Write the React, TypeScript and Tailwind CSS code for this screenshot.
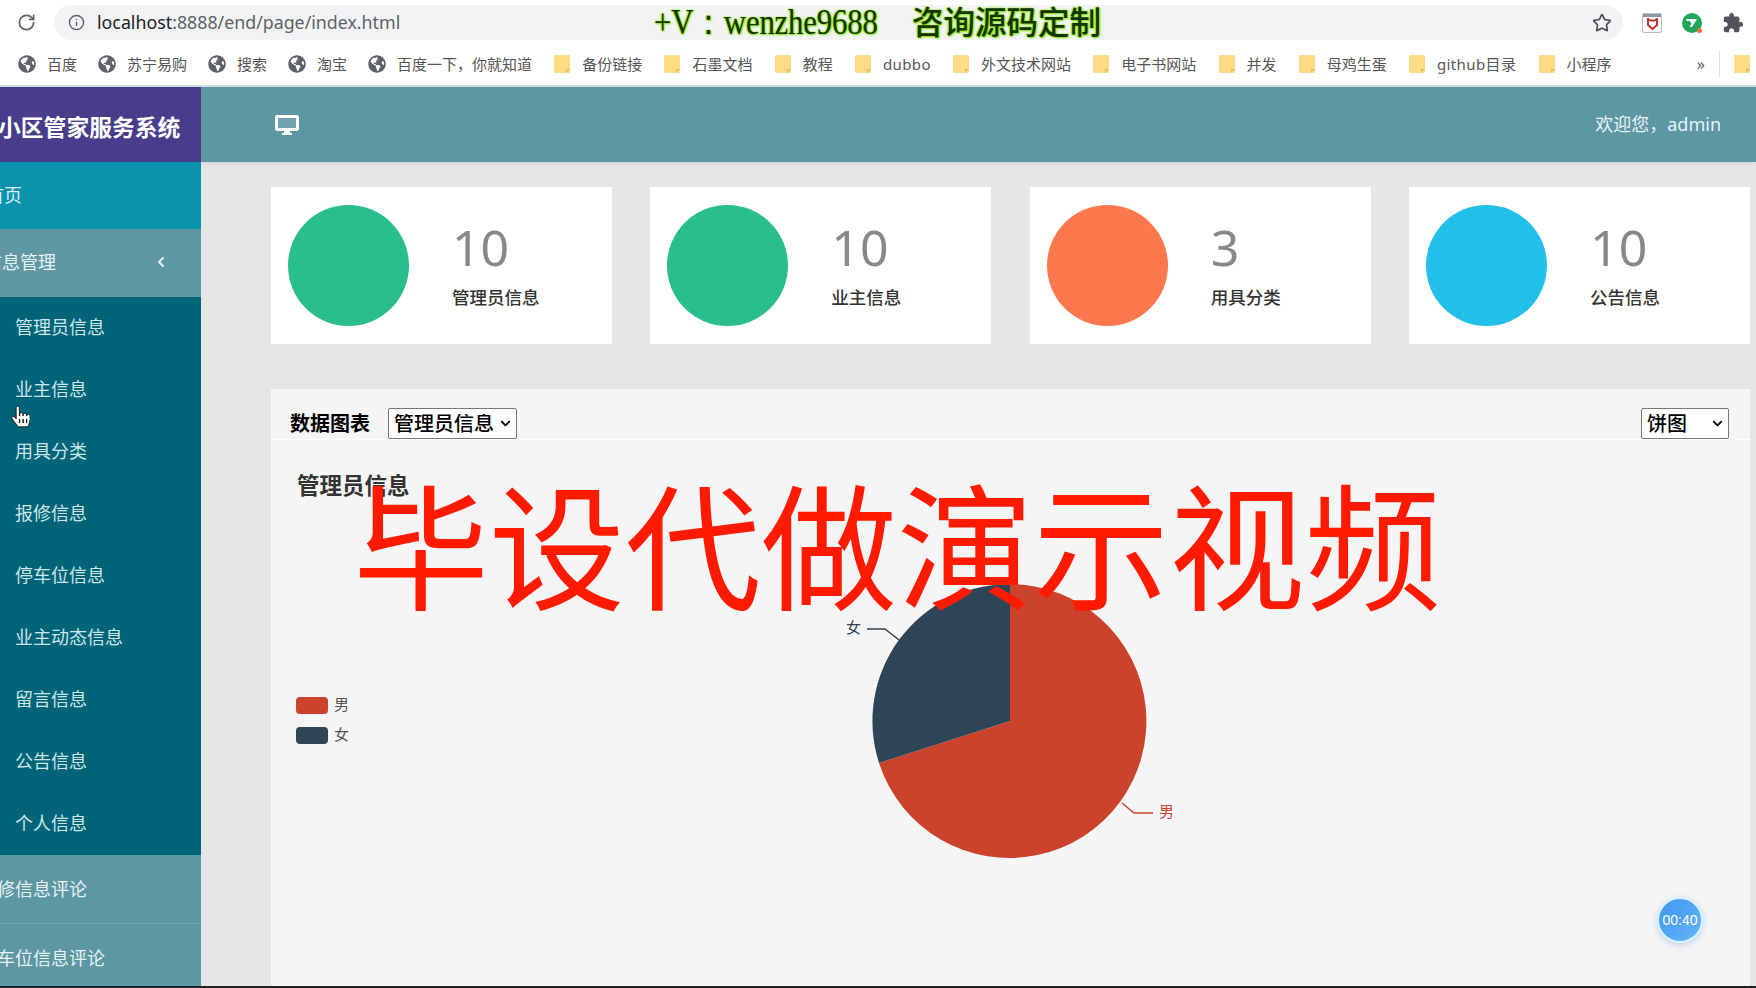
import React from 'react';
import { ChevronDown, ChevronLeft, RotateCw, Info, Star } from 'lucide-react';
import { FaGlobeAmericas, FaHandPointer } from 'react-icons/fa';
import { MdExtension } from 'react-icons/md';

const cjk = "font-['Noto_Sans','Noto_Sans_CJK_SC',sans-serif]";

type Bookmark = { label: string; folder?: boolean; latin?: boolean };

const bookmarks: Bookmark[] = [
  { label: '百度' },
  { label: '苏宁易购' },
  { label: '搜索' },
  { label: '淘宝' },
  { label: '百度一下，你就知道' },
  { label: '备份链接', folder: true },
  { label: '石墨文档', folder: true },
  { label: '教程', folder: true },
  { label: 'dubbo', folder: true, latin: true },
  { label: '外文技术网站', folder: true },
  { label: '电子书网站', folder: true },
  { label: '并发', folder: true },
  { label: '母鸡生蛋', folder: true },
  { label: 'github目录', folder: true, latin: true },
  { label: '小程序', folder: true },
];

const subMenu = ['管理员信息', '业主信息', '用具分类', '报修信息', '停车位信息', '业主动态信息', '留言信息', '公告信息', '个人信息'];

const stats = [
  { value: '10', label: '管理员信息', color: 'bg-[#2abf8a]' },
  { value: '10', label: '业主信息', color: 'bg-[#2abf8a]' },
  { value: '3', label: '用具分类', color: 'bg-[#fe784e]' },
  { value: '10', label: '公告信息', color: 'bg-[#22bfe8]' },
];

const FolderIcon = () => (
  <svg width="16" height="18" viewBox="0 0 16 18" className="shrink-0">
    <path d="M1 0h14a1 1 0 0 1 1 1v16a1 1 0 0 1-1 1H1a1 1 0 0 1-1-1V1a1 1 0 0 1 1-1z" fill="#fddc85" />
    <path d="M12 18l4-4h-3a1 1 0 0 0-1 1z" fill="#e8bd5c" />
  </svg>
);

const BrowserBar = () => (
  <div className="relative h-[87px] bg-white">
    <div className="flex h-[40px] items-center pt-[5px]">
      <RotateCw className="ml-[17px] h-[19px] w-[19px] text-[#5f6368]" strokeWidth={2.2} />
      <div className="ml-[18px] flex h-[35px] w-[1569px] items-center rounded-full bg-[#f1f3f4] pl-[14px] pr-[11px]">
        <Info className="h-[17px] w-[17px] text-[#5f6368]" />
        <span className="ml-[12px] pb-[1px] font-['Noto_Sans',sans-serif] text-[17.800px] text-[#5f6368]">
          <span className="text-[#202124]">localhost</span>:8888/end/page/index.html
        </span>
        <Star className="ml-auto h-[20px] w-[20px] text-[#4a4d50]" />
      </div>
      <div className="ml-[19px] flex h-[20px] w-[20px] flex-col items-center rounded-[2px] border border-[#bbb] bg-white">
        <div className="h-[3px] w-full bg-[#8d99a5]" />
        <svg width="11" height="12" viewBox="0 0 11 12" className="mt-[1px]">
          <path d="M1 1l2.500 1.500h4L10 1v6l-4.500 4L1 7z" fill="none" stroke="#c0342c" strokeWidth="2" />
        </svg>
      </div>
      <div className="relative ml-[20px] flex h-[20px] w-[20px] items-center justify-center rounded-full bg-[#1fa65a]">
        <svg width="12" height="10" viewBox="0 0 12 10">
          <path d="M0 1h11L6 9H3.500l2-3.500L3.500 3H1z" fill="#fff" />
        </svg>
        <div className="absolute bottom-0 right-0 h-[5px] w-[5px] rounded-full bg-[#e8703a]" />
      </div>
      <MdExtension className="ml-[20px] h-[22px] w-[22px] text-[#50545a]" />
    </div>
    <div className={`flex h-[45px] items-center gap-[21px] pl-[18px] pr-[6px] pt-[3px] text-[15px] text-[#555] ${cjk}`}>
      {bookmarks.map((b) => (
        <div key={b.label} className={`flex items-center whitespace-nowrap ${b.folder ? 'ml-[1.200px] gap-[12px]' : 'gap-[11px]'}`}>
          {b.folder ? <FolderIcon /> : <FaGlobeAmericas className="h-[18px] w-[18px] text-[#5f6368]" />}
          <span className={b.latin ? 'tracking-[0.4px]' : ''}>{b.label}</span>
        </div>
      ))}
      <div className="ml-auto flex items-center gap-[14px]">
        <span className="text-[16px] leading-none">»</span>
        <div className="h-[26px] w-px bg-[#ddd]" />
        <FolderIcon />
      </div>
    </div>
    <div className="h-[2px] bg-[#cfe0e2]" />
    {/* 录屏时盖在地址栏上的水印 */}
    <div className={`absolute left-[654px] -top-[5px] flex items-center whitespace-nowrap text-[#143400] [text-shadow:0_0_2px_#8be000,1px_1px_2px_#7ce000,-1px_0_1px_#a5f000] ${cjk}`}>
      <span className="w-[258px] origin-left scale-x-[0.855] font-['Liberation_Serif',serif] text-[36px] tracking-[-0.2px]">+V：wenzhe9688</span>
      <span className="text-[31.500px] font-medium leading-[42px]">咨询源码定制</span>
    </div>
  </div>
);

const Sidebar = () => (
  <aside className={`w-[201px] shrink-0 overflow-hidden bg-[#006478] ${cjk}`}>
    <div className="flex h-[75px] items-center bg-[#483d8b] pt-[8px] text-[22.800px] font-bold text-white">
      <span className="-ml-[2px] whitespace-nowrap">小区管家服务系统</span>
    </div>
    <div className="flex h-[67px] items-center bg-[#0b93ad] pb-[1px] text-[18px] text-[#dff1f4]">
      <span className="-ml-[14px] whitespace-nowrap">首页</span>
    </div>
    <div className="flex h-[68px] items-center justify-between bg-[#5f98a3] pb-[2px] pr-[32px] text-[18px] text-[#e6f3f5]">
      <span className="-ml-[16px] whitespace-nowrap">信息管理</span>
      <ChevronLeft className="h-[16px] w-[16px]" strokeWidth={3} />
    </div>
    <div className="flex flex-col text-[18px] text-[#cde6ea]">
      {subMenu.map((item) => (
        <div key={item} className="flex h-[62px] items-center pb-[2px] pl-[15px]">
          {item}
        </div>
      ))}
    </div>
    <div className="flex h-[69px] items-center border-b border-[#6ea2ac] bg-[#5c97a2] text-[18px] text-[#e6f3f5]">
      <span className="-ml-[21px] whitespace-nowrap">报修信息评论</span>
    </div>
    <div className="flex h-[69px] items-center bg-[#5c97a2] text-[18px] text-[#e6f3f5]">
      <span className="-ml-[21px] whitespace-nowrap">停车位信息评论</span>
    </div>
  </aside>
);

const PieChart = () => (
  <svg width="1479" height="450" viewBox="0 0 1479 450" className="block">
    <g transform="translate(-271 -501)" fontFamily="'Noto Sans CJK SC', sans-serif" fontSize="15">
      <path d="M1010 721 L1010 584 A137 137 0 1 1 879 763 Z" fill="#cb432d" />
      <path d="M1010 721 L879 763 A137 137 0 0 1 1010 584 Z" fill="#2e4558" />
      <path d="M867 629 h18 l14 11" fill="none" stroke="#2e4558" strokeWidth="1.500" />
      <path d="M1122 803 l12 10 h19" fill="none" stroke="#c9432e" strokeWidth="1.500" />
      <text x="846" y="633" fill="#2e4558">女</text>
      <text x="1159" y="817" fill="#c9432e">男</text>
      <rect x="296" y="697" width="32" height="17" rx="4" fill="#cb432d" />
      <rect x="296" y="727" width="32" height="17" rx="4" fill="#2e4558" />
      <text x="334" y="710" fill="#555">男</text>
      <text x="334" y="740" fill="#555">女</text>
    </g>
  </svg>
);

const SelectBox = ({ options, width }: { options: string[]; width: string }) => (
  <div className={`relative h-[31px] ${width}`}>
    <select className="h-full w-full appearance-none rounded-[2px] border border-[#777] bg-white pl-[5px] text-[20px] font-medium leading-none text-black">
      {options.map((o) => (
        <option key={o}>{o}</option>
      ))}
    </select>
    <ChevronDown className="pointer-events-none absolute right-[4px] top-[8px] h-[15px] w-[15px] text-black" strokeWidth={3} />
  </div>
);

const Main = () => (
  <main className={`min-w-0 flex-1 ${cjk}`}>
    <header className="flex h-[75px] items-center justify-between bg-[#5c97a2] pl-[74px] pr-[35px] shadow-[0_2px_4px_rgba(0,0,0,0.08)]">
      <svg width="24" height="20" viewBox="0 0 24 20">
        <path d="M2 0h20a2 2 0 0 1 2 2v12a2 2 0 0 1-2 2h-7v2h2v2H7v-2h2v-2H2a2 2 0 0 1-2-2V2a2 2 0 0 1 2-2z" fill="#fff" />
        <path d="M3 3h18v10H3z" fill="#6fa5ae" />
      </svg>
      <span className="text-[18px] text-[#e8f4f5]">欢迎您，admin</span>
    </header>
    <div className="pl-[70px] pr-[6px] pt-[25px]">
      <div className="flex gap-[38.400px]">
        {stats.map((s) => (
          <div key={s.label} className="flex h-[157px] w-[341px] items-center bg-white pl-[17px]">
            <div className={`h-[121px] w-[121px] rounded-full ${s.color}`} />
            <div className="ml-[43px]">
              <div className="h-[58px] font-['Noto_Sans',sans-serif] text-[50px] leading-[52px] text-[#888]">{s.value}</div>
              <div className="mt-[5px] text-[17.500px] font-medium text-[#333]">{s.label}</div>
            </div>
          </div>
        ))}
      </div>
      <section className="mt-[45px] h-[600px] bg-[#f5f5f5]">
        <div className="flex h-[51px] items-start border-b border-white pl-[19px] pr-[21px] pt-[19px]">
          <div className="flex items-center">
            <span className="text-[20px] font-bold leading-[31px] text-black">数据图表</span>
            <div className="ml-[18px]">
              <SelectBox options={['管理员信息', '业主信息', '用具分类', '公告信息']} width="w-[129px]" />
            </div>
          </div>
          <div className="ml-auto">
            <SelectBox options={['饼图', '柱状图', '折线图']} width="w-[88px]" />
          </div>
        </div>
        <h2 className="pl-[26px] pt-[30px] text-[22.500px] font-semibold leading-[32px] text-[#333]">管理员信息</h2>
        <div className="-mt-px">
          <PieChart />
        </div>
      </section>
    </div>
  </main>
);

export default function App() {
  return (
    <div className="relative h-[988px] w-[1756px] overflow-hidden bg-[#e6e6e6]">
      <BrowserBar />
      <div className="flex h-[901px]">
        <Sidebar />
        <Main />
      </div>
      {/* 鼠标指针 */}
      <FaHandPointer className="absolute left-[12px] top-[405px] h-[23px] w-[18px] text-white [&_path]:stroke-black [&_path]:[stroke-width:20px]" />
      {/* 大水印 */}
      <div className={`absolute left-[353px] top-[468px] whitespace-nowrap text-[136px] leading-[160px] text-[#ff1a00] ${cjk}`}>
        毕设代做演示视频
      </div>
      {/* 录屏计时 */}
      <div className="absolute left-[1657px] top-[897px] flex h-[46px] w-[46px] items-center justify-center rounded-full border-2 border-[#d8efff] bg-gradient-to-br from-[#3f97ef] to-[#63b4f8] font-['Liberation_Sans',sans-serif] text-[14px] text-white shadow-[0_2px_6px_rgba(63,151,239,0.35)]">
        00:40
      </div>
      <div className="absolute bottom-0 left-0 h-[2px] w-full bg-[#222]" />
    </div>
  );
}
